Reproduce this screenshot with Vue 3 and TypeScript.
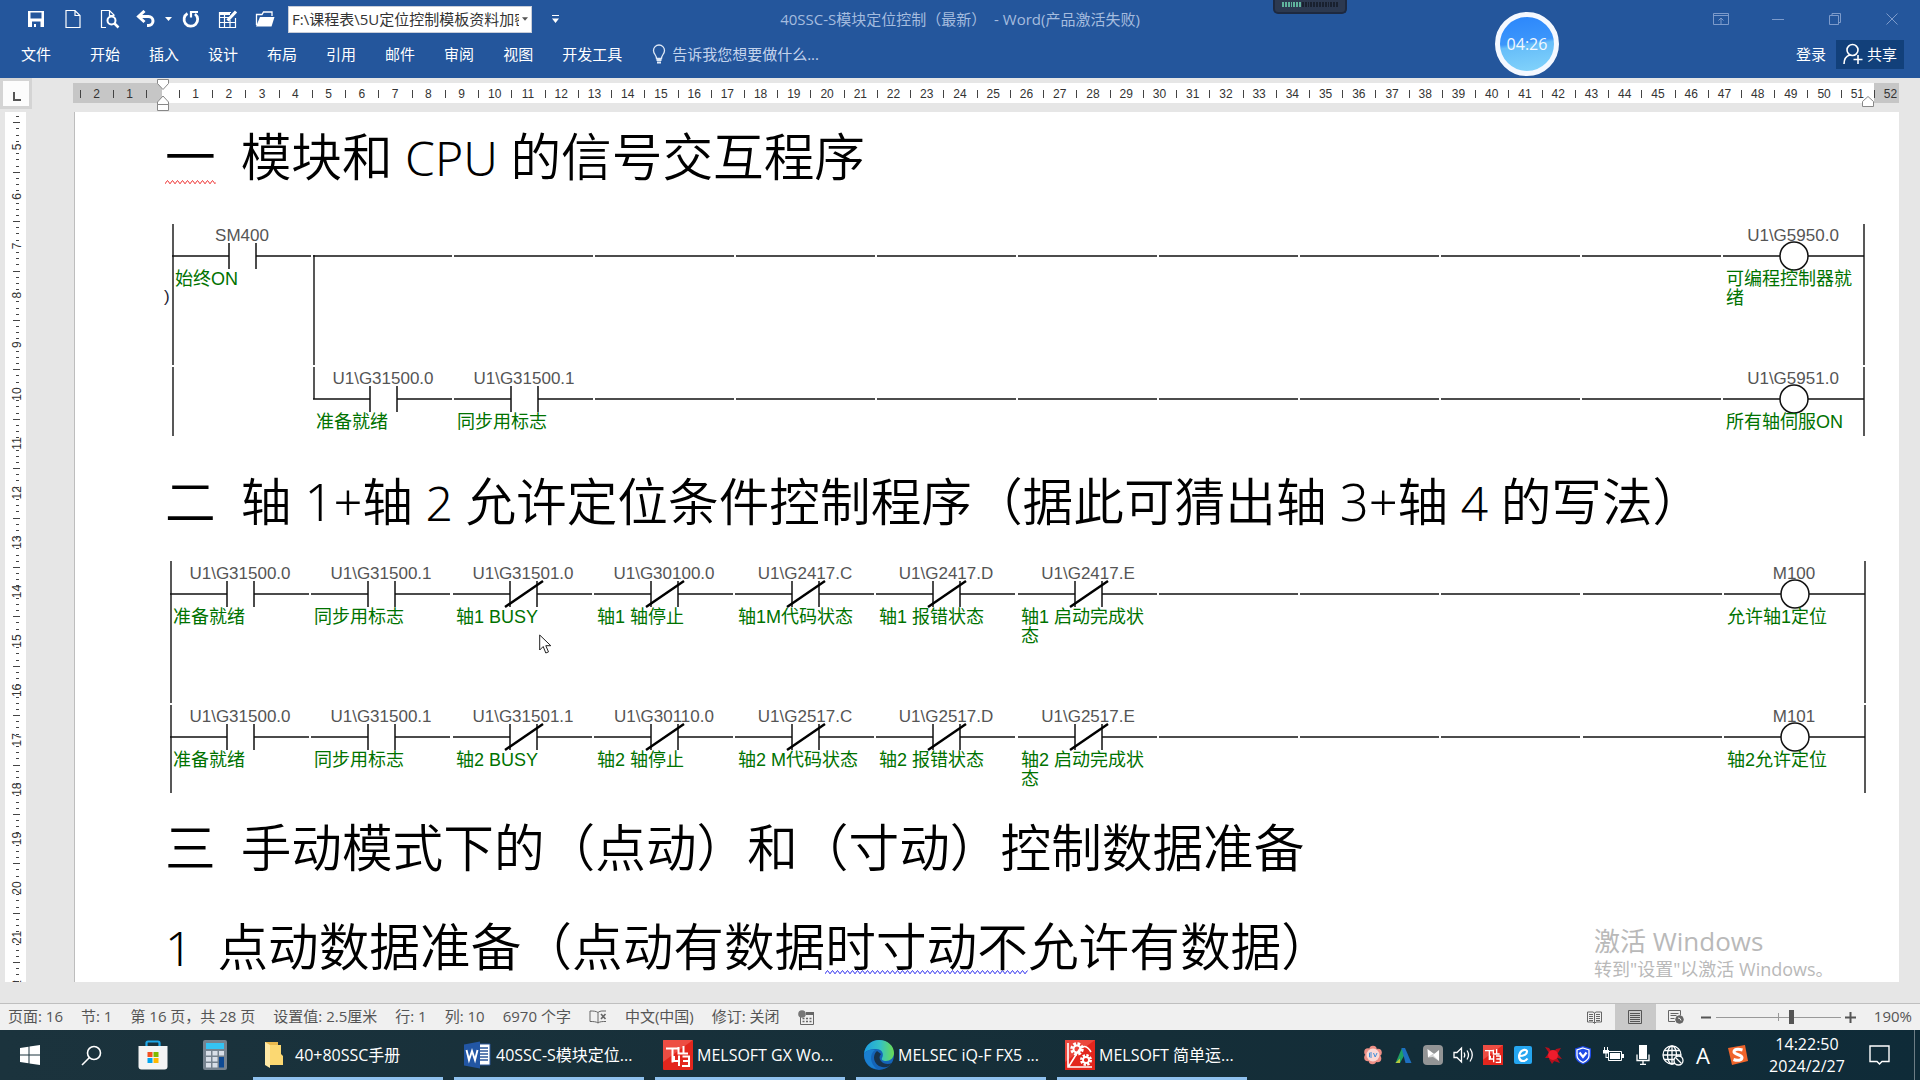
<script setup lang="ts">
import { ref } from 'vue'

type Kind = 'open' | 'closed' | 'coil' | 'wire'
interface Cell { col: number; kind: Kind; name?: string; notes?: string[] }
interface Rung { y: number; from: number; cells: Cell[] }
interface Ladder { x: number; step: number; height: number; breakY: number; rungs: Rung[]; branch?: boolean }

const COLUMNS = 12

function rung(y: number, from: number, parts: Cell[]): Rung {
  const cells: Cell[] = []
  for (let col = from; col < COLUMNS; col++) {
    cells.push(parts.find((p) => p.col === col) ?? { col, kind: 'wire' })
  }
  return { y, from, cells }
}

function part(col: number, kind: Kind, name: string, ...notes: string[]): Cell {
  return { col, kind, name, notes }
}

const signalLadder: Ladder = {
  x: 7, step: 141, height: 212, breakY: 142, branch: true,
  rungs: [
    rung(32, 0, [
      part(0, 'open', 'SM400', '始终ON'),
      part(11, 'coil', 'U1\\G5950.0', '可编程控制器就', '绪'),
    ]),
    rung(175, 1, [
      part(1, 'open', 'U1\\G31500.0', '准备就绪'),
      part(2, 'open', 'U1\\G31500.1', '同步用标志'),
      part(11, 'coil', 'U1\\G5951.0', '所有轴伺服ON'),
    ]),
  ],
}

const axisLadder: Ladder = {
  x: 5, step: 1695 / COLUMNS, height: 232, breakY: 143,
  rungs: [
    rung(33, 0, [
      part(0, 'open', 'U1\\G31500.0', '准备就绪'),
      part(1, 'open', 'U1\\G31500.1', '同步用标志'),
      part(2, 'closed', 'U1\\G31501.0', '轴1 BUSY'),
      part(3, 'closed', 'U1\\G30100.0', '轴1 轴停止'),
      part(4, 'closed', 'U1\\G2417.C', '轴1M代码状态'),
      part(5, 'closed', 'U1\\G2417.D', '轴1 报错状态'),
      part(6, 'closed', 'U1\\G2417.E', '轴1 启动完成状', '态'),
      part(11, 'coil', 'M100', '允许轴1定位'),
    ]),
    rung(176, 0, [
      part(0, 'open', 'U1\\G31500.0', '准备就绪'),
      part(1, 'open', 'U1\\G31500.1', '同步用标志'),
      part(2, 'closed', 'U1\\G31501.1', '轴2 BUSY'),
      part(3, 'closed', 'U1\\G30110.0', '轴2 轴停止'),
      part(4, 'closed', 'U1\\G2517.C', '轴2 M代码状态'),
      part(5, 'closed', 'U1\\G2517.D', '轴2 报错状态'),
      part(6, 'closed', 'U1\\G2517.E', '轴2 启动完成状', '态'),
      part(11, 'coil', 'M101', '轴2允许定位'),
    ]),
  ],
}

function cellPath(l: Ladder, c: Cell, y: number): string {
  const x = colX(l, c)
  if (c.kind === 'wire') return `M${x} ${y}h139`
  if (c.kind === 'coil') return `M${x} ${y}h57M${x + 85} ${y}h56`
  return `M${x} ${y}h57M${x + 84} ${y}h55`
}
const colX = (l: Ladder, c: Cell) => Math.round(l.x + c.col * l.step)

const menuTabs = ['开始', '插入', '设计', '布局', '引用', '邮件', '审阅', '视图', '开发工具']
const rulerNumbers = Array.from({ length: 51 }, (_, i) => i + 1)

/* one ruler unit on the side ruler is 49.4 units high and carries seven ticks */
const UNIT = 49.4
const sideNumbers = Array.from({ length: 18 }, (_, i) => ({ n: i + 5, y: 35 + i * UNIT }))
const sideTicks = Array.from({ length: 144 }, (_, i) => i - 5)
  .filter((i) => (i + 800) % 8 !== 0)
  .map((i) => ({ y: Math.round(35 + (i * UNIT) / 8), long: (i + 800) % 8 === 4 }))

const status = ['页面: 16', '节: 1', '第 16 页，共 28 页', '设置值: 2.5厘米', '行: 1', '列: 10', '6970 个字']
const zoom = ref(61)
const templatePath = ref('path')
const meter = Array.from({ length: 20 }, (_, i) => i)
</script>

<template>
  <div class="screen">
    <header class="ribbon">
      <div class="title-row">
        <div class="qat">
          <button class="q" aria-label="保存"><svg width="18" height="18" viewBox="0 0 18 18"><path d="M1 1h16v16H1z M3.500 2.500v6h11v-6z M5 11.500v5.500h2v-3h2v3h4.500v-5.500z" fill="#fff" fill-rule="evenodd" /></svg></button>
          <button class="q" aria-label="新建"><svg width="18" height="20" viewBox="0 0 18 20" fill="none" stroke="#fff" stroke-width="1.200"><path d="M2 1.500h9l5 5v12H2z M11 1.500v5h5" /></svg></button>
          <button class="q" aria-label="打印预览"><svg width="20" height="20" viewBox="0 0 20 20" fill="none" stroke="#fff" stroke-width="1.200"><path d="M6 18.500H1.500v-17h8l4.500 4.500v1 M9.500 1.500v5H14" /><circle cx="11.500" cy="11.500" r="4" stroke-width="2" /><path d="M14.500 14.500l4 4" stroke-width="2.500" /></svg></button>
          <button class="q undo" aria-label="撤消"><svg width="20" height="18" viewBox="0 0 20 18" fill="none" stroke="#fff" stroke-width="3"><path d="M4 6.500h8.500a4.500 4.500 0 0 1 0 9H11" /><path d="M8.500 1L2.500 6.500l6 5.500" /></svg></button>
          <button class="q drop" aria-label="撤消列表"><svg width="7" height="4" viewBox="0 0 7 4"><path d="M0 0h7L3.500 4z" fill="#fff" /></svg></button>
          <button class="q" aria-label="重复"><svg width="20" height="20" viewBox="0 0 20 20" fill="none" stroke="#fff"><path d="M6.500 4.500A6.800 6.800 0 1 0 14 5" stroke-width="2.800" /><path d="M10 8.500V3h7" stroke-width="2.200" /></svg></button>
          <button class="q" aria-label="绘制表格"><svg width="20" height="20" viewBox="0 0 20 20" fill="none" stroke="#fff" stroke-width="1.200"><path d="M13 3.500H1.500v15h16V9 M1.500 8.500h10 M1.500 13.500h16 M6.500 3.500v15 M12 11v7.500" /><path d="M2 4h10v2H2z" fill="#fff" stroke="none" /><path d="M9.500 11.500l8.500-9" stroke-width="3" /></svg></button>
          <button class="q" aria-label="打开"><svg width="20" height="18" viewBox="0 0 20 18"><path d="M1.500 15V4.500H7l1.500-2.500h8.500v4" fill="none" stroke="#fff" stroke-width="1.300" /><path d="M1 16.500L5 7h14.500l-3 9.500z" fill="#fff" /></svg></button>
          <div class="combo">
            <select v-model="templatePath" aria-label="文档位置"><option value="path">F:\课程表\5U定位控制模板资料加密</option></select>
            <svg width="6" height="4" viewBox="0 0 7 4"><path d="M0 0h7L3.500 4z" fill="#555" /></svg>
          </div>
          <button class="q more" aria-label="自定义快速访问工具栏"><svg width="7" height="8" viewBox="0 0 7 8"><path d="M0 0h7v1H0z M0 3.500h7L3.500 8z" fill="#fff" /></svg></button>
        </div>
        <div class="doc-title">40SSC-S模块定位控制（最新） &nbsp;- Word(产品激活失败)</div>
        <div class="window-buttons">
          <button aria-label="功能区显示选项"><svg viewBox="0 0 16 12" width="16" height="12"><path d="M.5.500h15v11H.500z M.500 2.500h15 M8 11V5 M5.500 7.500L8 5l2.500 2.500" /></svg></button>
          <button aria-label="最小化"><svg viewBox="0 0 12 12" width="12" height="12"><path d="M0 6.500h12" /></svg></button>
          <button aria-label="向下还原"><svg viewBox="0 0 12 12" width="12" height="12"><path d="M.5 2.500h9v9h-9z M3 2.500v-2h8.500v9h-2" /></svg></button>
          <button aria-label="关闭"><svg viewBox="0 0 12 12" width="12" height="12"><path d="M.5.500l11 11 M11.500.500l-11 11" /></svg></button>
        </div>
      </div>
      <nav class="tab-row">
        <button class="tab file">文件</button>
        <button v-for="t in menuTabs" :key="t" class="tab">{{ t }}</button>
        <label class="tell">
          <svg width="14" height="20" viewBox="0 0 14 20" fill="none" stroke="#dfe9f7" stroke-width="1.300"><path d="M4.500 14.500C4.500 11 1.500 10 1.500 6.500a5.500 5.500 0 0 1 11 0c0 3.500-3 4.500-3 8z" /><path d="M4.500 16h5 M5 18.500h4" stroke-width="1.800" /></svg>
          <input type="text" placeholder="告诉我您想要做什么..." aria-label="告诉我您想要做什么" />
        </label>
        <button class="tab login">登录</button>
        <button class="share">
          <svg width="20" height="22" viewBox="0 0 20 22" fill="none" stroke="#fff" stroke-width="1.600"><circle cx="9.500" cy="7" r="5.500" /><path d="M1 21c0-5 2.500-8 6-9 M15 12v9 M10.500 16.500h9" /></svg>
          共享
        </button>
      </nav>
      <div class="meter"><i v-for="m in meter" :key="m" :class="{ lit: m < 7 }"></i></div>
      <div class="timer">04:26</div>
    </header>

    <div class="ruler-row">
      <button class="tab-kind" aria-label="制表符"><span><svg width="8" height="9" viewBox="0 0 8 9"><path d="M1 0v8h7" fill="none" stroke="#555" stroke-width="2" /></svg></span></button>
      <div class="ruler">
        <div class="ruler-left"><span>2</span><span>1</span><span class="half"></span></div>
        <div class="ruler-main"><span v-for="n in rulerNumbers" :key="n">{{ n }}</span></div>
        <span class="ruler-end">52</span>
        <svg class="mark first" width="12" height="32" viewBox="0 0 12 32"><path d="M.5.500h11v4L6 10.500.500 4.500z M6 17l5.500 6v2.500H.500V23z M.500 25.500h11v6H.500z" /></svg>
        <svg class="mark last" width="12" height="11" viewBox="0 0 12 11"><path d="M6 .5l5.500 5v5H.500v-5z" /></svg>
      </div>
    </div>

    <div class="workspace">
      <div class="side">
        <svg width="21" height="870" viewBox="0 0 21 870">
          <rect width="21" height="870" fill="#fff" />
          <path v-for="t in sideTicks" :key="t.y" :d="t.long ? `M8 ${t.y}.5h7` : `M11 ${t.y}.5h3`" stroke="#444" />
          <text v-for="s in sideNumbers" :key="s.n" :transform="`translate(16 ${s.y}) rotate(-90)`">{{ s.n }}</text>
        </svg>
      </div>
      <main class="page">
        <h1><span class="misspelt">一<svg class="wave red" aria-hidden="true"><defs><pattern id="wave-red" width="5" height="5" patternUnits="userSpaceOnUse"><path d="M-1 5L2.500.500 6 5" /></pattern></defs><rect width="100%" height="5" fill="url(#wave-red)" /></svg></span><span class="latin">&nbsp; </span>模块和<span class="latin">&nbsp;CPU </span>的信号交互程序</h1>
        <svg v-for="(l, li) in [signalLadder]" :key="li" class="ladder" :viewBox="`0 0 1710 ${l.height}`">
          <path class="rail" :d="`M${l.x + 1} 0v${l.breakY - 1}m0 2V${l.height} M${l.x + 142} 31v${l.breakY - 32}m0 2V175 M1699 0v${l.breakY - 1}m0 2V${l.height}`" />
          <text class="stray" x="-1" y="78">)</text>
          <g v-for="r in l.rungs" :key="r.y">
            <g v-for="c in r.cells" :key="c.col">
              <path class="wire" :d="cellPath(l, c, r.y)" />
              <path v-if="c.kind === 'open' || c.kind === 'closed'" class="wire" :d="`M${colX(l, c) + 57} ${r.y - 13}v26m27 0v-26`" />
              <path v-if="c.kind === 'closed'" class="slash" :d="`M${colX(l, c) + 52} ${r.y + 13}l38 -26`" />
              <circle v-if="c.kind === 'coil'" class="coil" :cx="colX(l, c) + 71" :cy="r.y" r="14" />
              <text v-if="c.name" class="name" :x="colX(l, c) + 70" :y="r.y - 15">{{ c.name }}</text>
              <text v-for="(n, i) in c.notes" :key="n" class="note" :x="colX(l, c) + 3" :y="r.y + 29 + i * 19">{{ n }}</text>
            </g>
          </g>
        </svg>
        <h2>二<span class="latin">&nbsp; </span>轴<span class="latin wide">&nbsp;1+</span>轴<span class="latin">&nbsp;2 </span>允许定位条件控制程序（据此可猜出轴<span class="latin wide">&nbsp;3+</span>轴<span class="latin">&nbsp;4 </span>的写法）</h2>
        <svg v-for="(l, li) in [axisLadder]" :key="li" class="ladder second" :viewBox="`0 0 1710 ${l.height}`">
          <path class="rail" :d="`M${l.x + 1} 0v${l.breakY - 1}m0 2V${l.height} M1700 0v${l.breakY - 1}m0 2V${l.height}`" />
          <g v-for="r in l.rungs" :key="r.y">
            <g v-for="c in r.cells" :key="c.col">
              <path class="wire" :d="cellPath(l, c, r.y)" />
              <path v-if="c.kind === 'open' || c.kind === 'closed'" class="wire" :d="`M${colX(l, c) + 57} ${r.y - 13}v26m27 0v-26`" />
              <path v-if="c.kind === 'closed'" class="slash" :d="`M${colX(l, c) + 52} ${r.y + 13}l38 -26`" />
              <circle v-if="c.kind === 'coil'" class="coil" :cx="colX(l, c) + 71" :cy="r.y" r="14" />
              <text v-if="c.name" class="name" :x="colX(l, c) + 70" :y="r.y - 15">{{ c.name }}</text>
              <text v-for="(n, i) in c.notes" :key="n" class="note" :x="colX(l, c) + 3" :y="r.y + 29 + i * 19">{{ n }}</text>
            </g>
          </g>
        </svg>
        <h2 class="third">三<span class="latin">&nbsp; </span>手动模式下的（点动）和（寸动）控制数据准备</h2>
        <h3><span class="latin">1&nbsp; </span>点动数据准备（点动有数据<span class="misspelt">时寸动不<svg class="wave blue" aria-hidden="true"><defs><pattern id="wave-blue" width="5" height="5" patternUnits="userSpaceOnUse"><path d="M-1 5L2.500.500 6 5" /></pattern></defs><rect width="100%" height="5" fill="url(#wave-blue)" /></svg></span>允许有数据）</h3>
      </main>
      <div class="watermark"><p>激活 Windows</p><p class="sub">转到"设置"以激活 Windows。</p></div>
      <svg class="cursor" width="13" height="20" viewBox="0 0 13 20"><path d="M.7 1v15l3.500-3.500 2.600 6.500 2.700-1.100-2.700-6.200h5z" fill="#fff" stroke="#222" /></svg>
    </div>

    <footer class="status">
      <span v-for="s in status" :key="s">{{ s }}</span>
      <svg width="18" height="14" viewBox="0 0 18 14" fill="none" stroke="#666"><path d="M9 2.500v10.500 M9 2.500C7 1 4 1 1 1v10.500c3 0 6 0 8 1.500 M9 13c2-1.500 4-1.500 8-1.500 M9 2.500c1-1 3-1.500 4-1.500h4" /><path d="M12 4l4.500 5 M16.500 4L12 9" stroke-width="1.600" /></svg>
      <span>中文(中国)</span>
      <span>修订: 关闭</span>
      <svg width="17" height="15" viewBox="0 0 17 15"><path d="M2.500 5v9.500h13v-12H8" fill="none" stroke="#666" /><path d="M8 2h8v3H8z" fill="#666" /><circle cx="4" cy="4" r="3.800" fill="#777" /><path d="M4.500 8.500h9 M4.500 11.500h9" stroke="#666" stroke-width="1.500" stroke-dasharray="2 1.500" /></svg>
      <div class="view-tools">
        <div class="views">
          <button aria-label="阅读视图"><svg width="15" height="13" viewBox="0 0 15 13" fill="none" stroke="#666"><path d="M7.500 2v10 M7.500 2L6 1H.500v10H6l1.500 1.500L9 11h5.500V1H9z M2 3.500h4 M2 5.500h4 M2 7.500h4 M2 9.500h4 M9 3.500h4 M9 5.500h4 M9 7.500h4 M9 9.500h4" /></svg></button>
          <button class="on" aria-label="页面视图"><svg width="14" height="14" viewBox="0 0 14 14" fill="none" stroke="#555"><path d="M.5.500h13v13H.500z M2 3.500h10 M2 5.500h10 M2 7.500h10 M2 9.500h10 M2 11.500h10" /></svg></button>
          <button aria-label="Web 版式视图"><svg width="16" height="14" viewBox="0 0 16 14" fill="none" stroke="#666"><path d="M7 11.500H.500V.500h12v5 M2.500 3.500h8 M2.500 5.500h6 M2.500 8.500h4" /><circle cx="11.500" cy="9.500" r="3.800" fill="#666" /><path d="M10 8l2 .5 1 2" stroke="#eee" /></svg></button>
        </div>
        <button class="pm" aria-label="缩小"><svg width="11" height="11" viewBox="0 0 11 11"><path d="M0 5.500h10" stroke="#555" stroke-width="2" /></svg></button>
        <input v-model="zoom" class="zoom" type="range" min="0" max="100" aria-label="显示比例" />
        <button class="pm" aria-label="放大"><svg width="11" height="11" viewBox="0 0 11 11"><path d="M0 5.500h11 M5.500 0v11" stroke="#555" stroke-width="2" /></svg></button>
      </div>
      <span class="percent">190%</span>
    </footer>

    <div class="taskbar">
      <button class="sys" aria-label="开始"><svg width="20" height="20" viewBox="0 0 20 20" fill="#fff"><path d="M0 3l8.500-1.200v7.700H0z M9.500 1.600L20 0v9.500H9.500z M0 10.500h8.500v7.700L0 17z M9.500 10.500H20V20L9.500 18.400z" /></svg></button>
      <button class="sys" aria-label="搜索"><svg width="21" height="21" viewBox="0 0 21 21" fill="none" stroke="#fff" stroke-width="1.600"><circle cx="13" cy="8" r="6.500" /><path d="M8.500 12.500L1 20" /></svg></button>
      <button class="sys" aria-label="应用商店"><svg width="30" height="30" viewBox="0 0 30 30"><path d="M8.500 7V3q0-1.500 1.500-1.500h10q1.500 0 1.500 1.500v4" fill="none" stroke="#1ea7e8" stroke-width="2.200" /><path d="M.5 6h29v20.500q0 3-3 3h-23q-3 0-3-3z" fill="#f4f4f4" /><path d="M9.500 12h5v5h-5z" fill="#f25022" /><path d="M15.500 12h5v5h-5z" fill="#7fba00" /><path d="M9.500 18h5v5h-5z" fill="#00a4ef" /><path d="M15.500 18h5v5h-5z" fill="#ffb900" /></svg></button>
      <button class="sys" aria-label="计算器"><svg width="24" height="30" viewBox="0 0 24 30"><rect width="24" height="30" rx="2" fill="#76838f" /><path d="M3 3h18v6H3z" fill="#35c3f3" /><path d="M3 11h5v4.500H3z M9.500 11h5v4.500h-5z M16 11h5v4.500h-5z M3 17h5v4.500H3z M9.500 17h5v4.500h-5z M3 23h5v4.500H3z M9.500 23h5v4.500h-5z" fill="#d8dfe8" /><path d="M16 17h5v10.500h-5z" fill="#0d4a94" /></svg></button>
      <div class="tasks">
        <button class="task">
          <svg width="30" height="30" viewBox="0 0 30 30"><path d="M4 2h13v22l-4 1H4z" fill="#e9b94e" /><path d="M4 2l5 3v23l-5-3z" fill="#ffe9a6" /><path d="M9 5h11v9l2 2v9H9z" fill="#fbd872" /></svg>
          <span>40+80SSC手册</span>
        </button>
        <button class="task">
          <svg width="30" height="30" viewBox="0 0 30 30"><path d="M15 4h13v21H15z" fill="#fff" stroke="#2b579a" /><path d="M17 8h9 M17 11h9 M17 14h9 M17 17h9 M17 20h9" stroke="#2b579a" stroke-width="1.500" /><path d="M2 4.500L18 1.500v27L2 25.500z" fill="#2256a4" /><path d="M4.500 10l2.500 10 3-9 3 9 2.500-10" fill="none" stroke="#fff" stroke-width="1.900" /></svg>
          <span>40SSC-S模块定位...</span>
        </button>
        <button class="task">
          <svg width="30" height="30" viewBox="0 0 30 30"><rect width="30" height="30" rx="1" fill="#e3261d" /><path d="M0 0h30L0 22z" fill="#f4685d" opacity=".6" /><path d="M3 8.500h12 M9.500 8.500v14 M15.500 7v6.500H25 M20.500 6v7.500 M11 16v5h6 M16 15.500V26 M19.500 16.500h6.500V26h-7 M20 21h6" fill="none" stroke="#fff" stroke-width="2" /></svg>
          <span>MELSOFT GX Wo...</span>
        </button>
        <button class="task">
          <svg width="30" height="30" viewBox="0 0 30 30"><defs><linearGradient id="edge-top" x1="0" x2="1"><stop offset="0" stop-color="#1b9de2" /><stop offset=".55" stop-color="#35c1c4" /><stop offset="1" stop-color="#6bdc52" /></linearGradient></defs><circle cx="15" cy="15" r="15" fill="#1464b8" /><path d="M0 14C1 5 8 0 15 0c9 0 15 6 15 13 0 5-4 8-8 8-3 0-5-1-4-3 2-3 1-9-6-9-6 0-11 2-12 5z" fill="url(#edge-top)" /><path d="M13 11c-5 4-4 14 5 16 5 1 8-1 10-4-4 2-9 1-11-2-2-2-2-5 0-7z" fill="#17324a" /><path d="M11 10c-6 4-5 14 2 19C4 28 0 21 0 14c2-4 8-5 11-4z" fill="#1a7fd0" /></svg>
          <span>MELSEC iQ-F FX5 ...</span>
        </button>
        <button class="task">
          <svg width="30" height="30" viewBox="0 0 30 30"><rect width="30" height="30" fill="#e3261d" /><path d="M0 0h30L0 22z" fill="#f4685d" opacity=".5" /><path d="M3 3v24h24 M4 26L14 10c3-5 8-5 12 2" fill="none" stroke="#fff" stroke-width="1.600" /><circle cx="12" cy="9" r="5" fill="none" stroke="#fff" stroke-width="3.500" stroke-dasharray="2.500 1.400" /><circle cx="12" cy="9" r="3.500" fill="none" stroke="#fff" stroke-width="2" /><circle cx="21" cy="20" r="4.500" fill="none" stroke="#fff" stroke-width="3" stroke-dasharray="2.200 1.300" /><circle cx="21" cy="20" r="3" fill="none" stroke="#fff" stroke-width="1.800" /></svg>
          <span>MELSOFT 简单运...</span>
        </button>
      </div>
      <div class="tray">
        <button aria-label="EV"><svg width="20" height="20" viewBox="0 0 20 20"><g fill="#ee8f86"><circle cx="10" cy="4.500" r="3.800" /><circle cx="15" cy="7.500" r="3.800" /><circle cx="14.500" cy="13.500" r="3.800" /><circle cx="9.500" cy="15.500" r="3.800" /><circle cx="5" cy="12.500" r="3.800" /><circle cx="5" cy="7" r="3.800" /></g><circle cx="10" cy="10" r="6.500" fill="#fbd9d5" /><path d="M9 8H6.500v4H9 M6.500 10H9 M10.500 8l1.700 4L14 8" fill="none" stroke="#3d8fdc" /></svg></button>
        <button aria-label="Autodesk"><svg width="17" height="17" viewBox="0 0 17 17"><path d="M.5 16L7 1l3.500 5L5 16z" fill="#1fa064" /><path d="M.5 16L5 11.500V16z" fill="#b9c93c" /><path d="M6.500 1H10l6.500 15h-6z" fill="#1d6fc0" /></svg></button>
        <button aria-label="N"><svg width="20" height="20" viewBox="0 0 20 20"><rect width="20" height="20" rx="4" fill="#929495" /><path d="M4.500 4l6 4.500L5 12.500z M10 10l6-5v11z" fill="#fff" /><path d="M5 12.500L11 8l5 8-6-4z" fill="#fff" opacity=".6" /></svg></button>
        <button aria-label="音量"><svg width="21" height="18" viewBox="0 0 21 18" fill="none" stroke="#fff" stroke-width="1.300"><path d="M1 6.500h3L8.500 2v14L4 11.500H1z M11 6.500q1.500 2.500 0 5 M14 4.500q3 4.500 0 9 M17 2.500q4.500 6.500 0 13" /></svg></button>
        <button aria-label="GX"><svg width="20" height="20" viewBox="0 0 30 30"><rect width="30" height="30" fill="#e3261d" /><path d="M0 0h30L0 22z" fill="#f4685d" opacity=".6" /><path d="M3 8.500h12 M9.500 8.500v14 M15.500 7v6.500H25 M20.500 6v7.500 M11 16v5h6 M16 15.500V26 M19.500 16.500h6.500V26h-7 M20 21h6" fill="none" stroke="#fff" stroke-width="2" /></svg></button>
        <button aria-label="e"><svg width="18" height="18" viewBox="0 0 18 18"><rect width="18" height="18" rx="2" fill="#25a6f0" /><path d="M5 10c5 0 8-2 8-4.500S8 3 6 7s-.5 8 3 8c2 0 3.500-1 4.500-2.500" fill="none" stroke="#fff" stroke-width="2.200" /></svg></button>
        <button aria-label="连接"><svg width="20" height="20" viewBox="0 0 20 20"><path d="M2 2l4 1 4 6-4-1z M18 3l-5 1-3 5 5-1z M19 14l-4-5-6 1 5 3z M2 13l3-4 5 1-4 3z M9 19l-3-5 4-4 2 5z M17 18l-6-2-1-5 4 2z" fill="#b5101c" /><circle cx="10" cy="10" r="5" fill="#ee1c2c" /></svg></button>
        <button aria-label="安全"><svg width="18" height="20" viewBox="0 0 18 20"><path d="M9 1l8 2.500v7C17 15 13 18 9 19.500 5 18 1 15 1 10.500v-7z" fill="#1f4be6" /><path d="M9 3l6 2v5.500c0 3-3 5.500-6 7-3-1.500-6-4-6-7V5z" fill="none" stroke="#fff" stroke-width="1.300" /><path d="M5.500 7.500L9 12l3.500-4.500" fill="none" stroke="#fff" stroke-width="2.200" /></svg></button>
        <button aria-label="电源"><svg width="21" height="16" viewBox="0 0 21 16"><path d="M5.500 4.500h13v9h-13z" fill="none" stroke="#fff" /><path d="M7 6h10v6H7z M19 7h2v4h-2z M0 3h6v3.500H0z M1 0h1v3H1z M4 0h1v3H4z M2.500 6h1v4h2v1h-3z" fill="#fff" /></svg></button>
        <button aria-label="麦克风"><svg width="14" height="20" viewBox="0 0 14 20"><path d="M3 0h8v14H3z" fill="#fff" /><path d="M1 9.500v6h12v-6 M7 15.500v3.500 M4 19.300h6" fill="none" stroke="#fff" stroke-width="1.300" /></svg></button>
        <button aria-label="网络"><svg width="22" height="21" viewBox="0 0 22 21" fill="none" stroke="#fff" stroke-width="1.300"><circle cx="10" cy="10" r="9" /><path d="M1 10h18 M2.500 5.500h15 M2.500 14.500h10 M10 1v18" /><ellipse cx="10" cy="10" rx="4.500" ry="9" /><circle cx="16.500" cy="15.500" r="4.500" fill="#152d38" /><path d="M13.500 12.500l6 6" /></svg></button>
        <button class="ime">A</button>
        <button class="sogou" aria-label="输入法"><svg width="20" height="20" viewBox="0 0 20 20"><path d="M0 3L17 0l3 16-16 4z" fill="#f0652b" /><path d="M14.500 5C9 3.500 6 4.500 6 7s8 2.500 8 5.500-4.500 3.500-8.500 2" fill="none" stroke="#fff" stroke-width="3" /></svg></button>
      </div>
      <button class="clock"><span>14:22:50</span><span>2024/2/27</span></button>
      <button class="notify" aria-label="通知"><svg width="21" height="21" viewBox="0 0 21 21" fill="none" stroke="#fff" stroke-width="1.400"><path d="M1 1h19v15.500h-7L10.500 19 8 16.500H1z" /></svg></button>
      <div class="desktop-edge"></div>
    </div>
  </div>
</template>

<style>
body { margin: 0; }
</style>

<style scoped>
* { box-sizing: border-box; }
.screen { height: 100vh; display: flex; flex-direction: column; background: #e6e6e6; overflow: hidden; font: 15px/20px "Open Sans", "Noto Sans CJK SC", sans-serif; }
button { border: 0; padding: 0; background: none; color: inherit; font: inherit; display: flex; align-items: center; justify-content: center; }
svg { flex: none; display: block; }

.ribbon { position: relative; flex: none; height: 78px; background: #24569c; color: #fff; }
.title-row { display: grid; grid-template-columns: 1fr auto 1fr; height: 38px; align-items: center; }
.qat { display: flex; align-items: center; padding-left: 17px; height: 38px; }
.q { width: 37px; height: 30px; }
.q.undo { width: 36px; }
.q.drop { width: 8px; }
.q.more { margin-left: 5px; }
.combo { position: relative; width: 244px; height: 27px; margin-left: 5px; }
.combo select { width: 100%; height: 100%; appearance: none; border: 1px solid #c8cdd8; border-radius: 0; background: #fff; color: #333; font: inherit; padding: 0 12px 0 3px; }
.combo svg { position: absolute; right: 4px; top: 11px; }
.doc-title { color: #a5bcdf; white-space: pre; }
.window-buttons { display: flex; justify-content: flex-end; }
.window-buttons button { width: 57px; height: 36px; }
.window-buttons svg { fill: none; stroke: #7d9bcb; }
.tab-row { display: flex; align-items: center; height: 32px; padding: 0 16px 0 21px; }
.tab { margin-right: 29px; white-space: nowrap; }
.tab.file { margin-right: 39px; }
.tell { display: flex; align-items: center; gap: 6px; margin-left: 1px; flex: 1; }
.tell input { border: 0; padding: 0; background: none; width: 200px; font: inherit; color: #fff; }
.tell input::placeholder { color: #c3d3ec; opacity: 1; }
.tab.login { margin-right: 10px; }
.share { width: 68px; height: 29px; background: #12407a; gap: 4px; }
.meter { position: absolute; top: 0; right: 573px; width: 74px; height: 14px; background: #2c3950; border: 2px solid #1d2940; border-top: 0; border-radius: 0 0 5px 5px; display: flex; gap: 1px; padding: 2px 7px 5px; }
.meter i { flex: 1; background: #19212f; }
.meter i.lit { background: #5fb39c; }
.timer { position: absolute; top: 12px; right: 361px; width: 64px; height: 64px; border-radius: 50%; border: 5px solid #f4f8ff; background: linear-gradient(172deg, #2b86fb 0, #3c96fb 46%, #66bdf9 52%, #83d4fb 100%); color: #f2f9ff; display: flex; align-items: center; justify-content: center; font-size: 16px; }

.ruler-row { flex: none; height: 34px; display: flex; }
.tab-kind { width: 32px; height: 31px; background: #d4d4d4; padding-right: 1px; }
.tab-kind span { width: 26px; height: 25px; background: #fcfcfc; display: flex; align-items: center; justify-content: center; padding: 5px 0 0 3px; }
.ruler { position: relative; flex: 1; margin: 5px 21px 9px 41px; display: flex; background: #fff; font: 12px/22px "Liberation Sans", sans-serif; color: #333; height: 20px; }
.ruler span { position: relative; text-align: center; }
.ruler span::before { content: ""; position: absolute; left: 0; top: 7px; width: 1px; height: 8px; background: #444; }
.ruler-left { width: 89px; margin-right: 17px; background: #c6c6c6; display: flex; padding-left: 7px; }
.ruler-left span { width: 33px; }
.ruler-left .half { width: 16px; }
.ruler-main { flex: 1; display: flex; }
.ruler-main span { flex: 1 1 0; min-width: 0; }
.ruler-end { width: 25px; padding-left: 8px; background: #c6c6c6; }
.mark { position: absolute; fill: #fff; stroke: #888; }
.mark.first { left: 84px; top: -4px; }
.mark.last { right: 25px; top: 13px; }

.workspace { position: relative; flex: 1; min-height: 0; display: flex; padding: 0 21px 21px 0; }
.side { width: 74px; padding-left: 5px; overflow: hidden; }
.side text { font: 12px "Liberation Sans", sans-serif; fill: #333; text-anchor: middle; }
.page { flex: 1; min-width: 0; overflow: hidden; background: #fff; border-left: 1px solid #bdbdbd; padding: 5px 24px 0 90px; color: #000; }
h1, h2, h3 { margin: 0; height: 74px; font: 350 38pt/74px "Noto Sans CJK SC", sans-serif; white-space: nowrap; }
h2 { margin-top: 26px; }
h2.third { margin-top: 15px; }
h3 { margin-top: 25px; }
.latin { font: 300 36pt/60px "Noto Sans", sans-serif; white-space: pre; }
.latin.wide { font-size: 38pt; }
.misspelt { position: relative; display: inline-block; height: 74px; vertical-align: top; }
.wave { position: absolute; left: 0; bottom: 6px; width: 100%; height: 5px; }
.wave path { fill: none; stroke: #e33; }
.wave.blue path { stroke: #33e; }
.ladder { width: 100%; margin-top: 33px; overflow: visible; }
.ladder.second { margin-top: 25px; }
.rail { fill: none; stroke: #222; stroke-width: 1.500; }
.wire { fill: none; stroke: #111; stroke-width: 1.500; }
.slash { stroke: #000; stroke-width: 2.500; }
.coil { fill: #fff; stroke: #111; stroke-width: 1.500; }
.name { font: 17px "Liberation Sans", sans-serif; fill: #555; text-anchor: middle; }
.note { font: 18px "Liberation Sans", "Noto Sans CJK SC", sans-serif; fill: #007200; }
.stray { font: 17px "Liberation Sans", sans-serif; fill: #223; }
.watermark { position: absolute; right: 88px; bottom: 21px; width: 238px; color: #b9b9b9; white-space: nowrap; }
.watermark p { margin: 0; font-size: 26px; line-height: 30px; }
.watermark .sub { font-size: 18px; line-height: 26px; }
.cursor { position: absolute; left: 539px; top: 522px; }

.status { flex: none; height: 27px; display: flex; align-items: center; gap: 18px; border-top: 1px solid #bfbfbf; background: #f0f0f0; color: #555; padding: 0 8px; line-height: 18px; white-space: nowrap; }
.status > span { padding-bottom: 2px; }
.view-tools { display: flex; align-items: center; gap: 4px; margin-left: auto; align-self: stretch; }
.views { display: flex; align-self: stretch; }
.views button { width: 41px; }
.views .on { background: #c9c9c9; }
.pm { width: 11px; }
.zoom { appearance: none; width: 125px; height: 14px; margin: 0; background: linear-gradient(#999, #999) 62px 3px / 1px 8px no-repeat, linear-gradient(#999, #999) 0 7px / 100% 1px no-repeat; }
.zoom::-webkit-slider-thumb { appearance: none; width: 5px; height: 14px; background: #555; }

.taskbar { flex: none; height: 50px; display: flex; background: linear-gradient(90deg, #1b333d, #152e38 60%, #0f2b38); color: #fff; font-size: 16px; }
.sys { width: 62px; }
.sys:first-child { width: 60px; }
.tasks { display: flex; flex: 1; gap: 11px; margin-left: 7px; min-width: 0; }
.task { width: 190px; height: 50px; border-bottom: 3px solid #8fc1ee; justify-content: flex-start; padding: 2px 0 0 8px; gap: 4px; white-space: nowrap; }
.tray { display: flex; margin-right: 12px; }
.tray button { width: 30px; }
.tray .sogou { width: 40px; }
.tray .ime { font-size: 22px; }
.clock { width: 74px; flex-direction: column; line-height: 22px; white-space: nowrap; }
.notify { width: 70px; }
.desktop-edge { width: 6px; border-left: 1px solid #6d7d85; }
</style>
